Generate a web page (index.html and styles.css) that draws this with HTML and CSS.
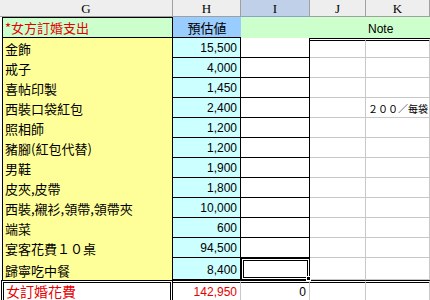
FILE: index.html
```html
<!DOCTYPE html>
<html>
<head>
<meta charset="utf-8">
<link rel="stylesheet" href="styles.css">
</head>
<body>
<div class="sheet">
  <div class="hd">G</div><div class="hd">H</div><div class="hd sel">I</div><div class="hd">J</div><div class="hd">K</div>

  <div class="gt">*女方訂婚支出</div><div class="ht">預估値</div><div class="nt">Note</div>

  <div class="gy">金飾</div><div class="hv">15,500</div><div class="iv first"></div><div class="c dbl"></div><div class="c dbl"></div>
  <div class="gy">戒子</div><div class="hv">4,000</div><div class="iv"></div><div class="c"></div><div class="c"></div>
  <div class="gy">喜帖印製</div><div class="hv">1,450</div><div class="iv"></div><div class="c"></div><div class="c"></div>
  <div class="gy">西裝口袋紅包</div><div class="hv">2,400</div><div class="iv"></div><div class="c"></div><div class="c note">２００／每袋</div>
  <div class="gy">照相師</div><div class="hv">1,200</div><div class="iv"></div><div class="c"></div><div class="c"></div>
  <div class="gy">豬腳(紅包代替)</div><div class="hv">1,200</div><div class="iv"></div><div class="c"></div><div class="c"></div>
  <div class="gy">男鞋</div><div class="hv">1,900</div><div class="iv"></div><div class="c"></div><div class="c"></div>
  <div class="gy">皮夾,皮帶</div><div class="hv">1,800</div><div class="iv"></div><div class="c"></div><div class="c"></div>
  <div class="gy">西裝,襯衫,領帶,領帶夾</div><div class="hv">10,000</div><div class="iv"></div><div class="c"></div><div class="c"></div>
  <div class="gy">端菜</div><div class="hv">600</div><div class="iv"></div><div class="c"></div><div class="c"></div>
  <div class="gy">宴客花費１０桌</div><div class="hv">94,500</div><div class="iv"></div><div class="c"></div><div class="c"></div>
  <div class="gy">歸寧吃中餐</div><div class="hv">8,400</div><div class="iv active"><span class="handle"></span></div><div class="c"></div><div class="c"></div>

  <div class="tot gtot">女訂婚花費</div><div class="tot num red">142,950</div><div class="tot num">0</div><div class="tot"></div><div class="tot"></div>
</div>
</body>
</html>
```
FILE: styles.css
```css
html, body {
  margin: 0;
  padding: 0;
  background: #ffffff;
}

.sheet {
  display: grid;
  grid-template-columns: 173px 68px 69px 56px 1fr;
  grid-template-rows: 17px 21px repeat(11, 20px) 22px 1fr;
  width: 430px;
  height: 300px;
  overflow: hidden;
  font-family: "Noto Sans CJK TC", "Noto Sans CJK JP", sans-serif;
  font-size: 13px;
  color: #000;
}

.sheet > div {
  box-sizing: border-box;
  min-width: 0;
  white-space: nowrap;
  overflow: hidden;
  display: flex;
  align-items: flex-end;
  line-height: 1;
  padding-bottom: 3px;
}

.hd {
  background: #eeeeee;
  border-right: 1px solid #a0a0a0;
  border-bottom: 1px solid #a0a0a0;
  justify-content: center;
  align-items: center !important;
  padding-bottom: 0 !important;
  font-family: "Liberation Serif", serif;
  font-size: 13px;
}

.hd.sel {
  background: #bfd0e8;
  border-bottom-color: #8aa4c8;
}

.gt {
  margin-left: 2px;
  background: #ccffcc;
  border: 1px solid #000;
  color: #e60000;
  padding-left: 2px;
}

.ht {
  background: #99ccff;
  border-bottom: 1px solid #000;
  justify-content: center;
}

.nt {
  grid-column: span 3;
  background: #ccffcc;
  padding-left: 127px;
  font-family: "Liberation Sans", sans-serif;
  font-size: 12px;
}

.gy {
  margin-left: 2px;
  background: #ffff99;
  border-left: 1px solid #000;
  border-right: 1px solid #000;
  padding-left: 2px;
}

.hv {
  background: #ccffff;
  border-right: 1px solid #000;
  border-bottom: 1px solid #000;
  justify-content: flex-end;
  padding-right: 3px;
  font-family: "Liberation Sans", sans-serif;
  font-size: 12px;
}

.iv {
  background: #fff;
  border-right: 1px solid #000;
  border-bottom: 1px solid #000;
}

.iv.active {
  position: relative;
  overflow: visible !important;
  border: 3px double #000;
}

.handle {
  position: absolute;
  right: -4px;
  bottom: -4px;
  width: 5px;
  height: 5px;
  box-sizing: border-box;
  background: #000;
  border: 1px solid #fff;
}

.c {
  border-right: 1px solid #c8c8c8;
  border-bottom: 1px solid #c8c8c8;
}

.c.dbl {
  border-top: 3px double #000;
}

.note {
  font-size: 10px;
  padding-left: 2px;
}

.tot {
  border-top: 3px double #000;
  border-right: 1px solid #c8c8c8;
  justify-content: flex-end;
  padding-right: 3px;
  padding-bottom: 2px !important;
  font-family: "Liberation Sans", sans-serif;
  font-size: 12px;
}

.gtot {
  margin-left: 1px;
  border-left: 3px double #000;
  border-right: 3px double #000;
  justify-content: flex-start;
  align-items: flex-start !important;
  padding-left: 2px;
  padding-top: 1px;
  padding-bottom: 0 !important;
  font-family: "Noto Sans CJK TC", sans-serif;
  font-size: 14px;
  color: #e60000;
}

.red {
  color: #e60000;
}
```
